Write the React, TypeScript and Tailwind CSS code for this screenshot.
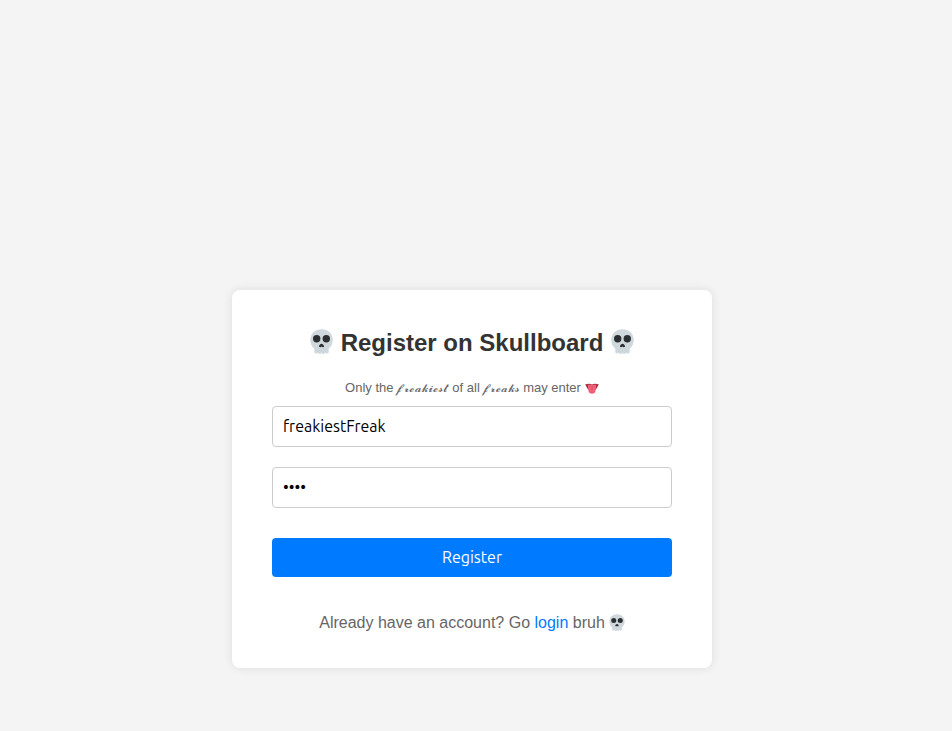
import { useState } from "react";

function Skull({ className }: { className: string }) {
  return (
    <svg viewBox="0 0 23 25" className={className} role="img" aria-label="skull">
      <path
        d="M11.500.3C5 .3.300 4.800.300 11c0 4.400 2.100 7.600 5 9h12.400c2.900-1.400 5-4.600 5-9C22.700 4.800 18 .3 11.500.3Z"
        fill="#cfd8dd"
      />
      <g fill="#cfd8dd">
        <rect x="4.300" y="17" width="3.700" height="7.600" rx="1.700" />
        <rect x="7.900" y="17" width="3.700" height="7.900" rx="1.700" />
        <rect x="11.400" y="17" width="3.700" height="7.900" rx="1.700" />
        <rect x="15" y="17" width="3.700" height="7.600" rx="1.700" />
      </g>
      <path d="M7.950 20.500v2.500M11.500 20.500v2.500M15.050 20.500v2.500" stroke="#bccbd3" strokeWidth=".6" />
      <circle cx="6.700" cy="9.700" r="3.700" fill="#2b2f31" />
      <circle cx="16.300" cy="9.700" r="3.700" fill="#2b2f31" />
      <path
        d="M11.500 14.700c-1.200 0-2.500 1.500-2.500 2.600 0 1.100 1.700 1.100 2.500.3.800.8 2.500.8 2.500-.3 0-1.100-1.300-2.600-2.500-2.600Z"
        fill="#2b2f31"
      />
    </svg>
  );
}

function Tongue({ className }: { className: string }) {
  return (
    <svg viewBox="0 0 14 11" className={className} role="img" aria-label="tongue">
      <path d="M0 1.500C2.500.5 5 .300 7 1.400 9 .3 11.500.5 14 1.500c-1 .5-2 4.500-4 5.500H4C2 6 1 2 0 1.500Z" fill="#a52f3c" />
      <path d="M2.800 1.800h8.400L10.600 7.500C10.400 9.600 9 10.700 7 10.700S3.600 9.600 3.400 7.500Z" fill="#f2607a" />
      <path d="M7 2.500v4.500" stroke="#d84a63" strokeWidth=".8" />
    </svg>
  );
}

const script = "font-['Noto_Sans_Math','Liberation_Sans',sans-serif] leading-[0]";

const field =
  "block h-[41px] w-full rounded border border-[#ccc] bg-white px-2.5 pb-0.5 font-['Ubuntu','Noto_Sans',sans-serif] text-base text-black outline-none";

export default function App() {
  const [username, setUsername] = useState("freakiestFreak");
  const [password, setPassword] = useState("bruh");

  return (
    <main className="flex min-h-screen flex-col items-center bg-[#f4f4f4] pt-[290px] pr-2 font-['Liberation_Sans',Arial,sans-serif]">
      <section className="w-full max-w-[480px] rounded-lg bg-white px-10 pt-[39px] pb-9 text-center shadow-[0_0_10px_rgba(0,0,0,0.1)]">
        <h1 className="flex items-start justify-center gap-2 text-2xl leading-7 font-bold text-[#333]">
          <Skull className="h-[25px] w-[23px]" />
          Register on Skullboard
          <Skull className="h-[25px] w-[23px]" />
        </h1>
        <p className="mt-[23px] flex items-center justify-center gap-1 text-[13px] leading-4 text-[#666]">
          <span>
            Only the <span className={script}>𝓯𝓻𝓮𝓪𝓴𝓲𝓮𝓼𝓽</span> of all <span className={script}>𝓯𝓻𝓮𝓪𝓴𝓼</span> may enter
          </span>
          <Tongue className="h-[11px] w-3.5" />
        </p>
        <form className="mt-2.5" onSubmit={(event) => event.preventDefault()}>
          <input
            aria-label="Username"
            type="text"
            className={field}
            value={username}
            onChange={(event) => setUsername(event.target.value)}
          />
          <input
            aria-label="Password"
            type="password"
            className={`mt-5 ${field}`}
            value={password}
            onChange={(event) => setPassword(event.target.value)}
          />
          <button
            type="submit"
            className="mt-[30px] block h-[39px] w-full rounded bg-[#007bff] pb-0.5 font-['Ubuntu','Noto_Sans',sans-serif] text-base text-white"
          >
            Register
          </button>
        </form>
        <p className="mt-9 flex items-center justify-center gap-1 text-base leading-[19px] text-[#666]">
          <span>
            Already have an account? Go{" "}
            <a href="#login" className="text-[#007bff]">
              login
            </a>{" "}
            bruh
          </span>
          <Skull className="h-[17px] w-4" />
        </p>
      </section>
    </main>
  );
}
